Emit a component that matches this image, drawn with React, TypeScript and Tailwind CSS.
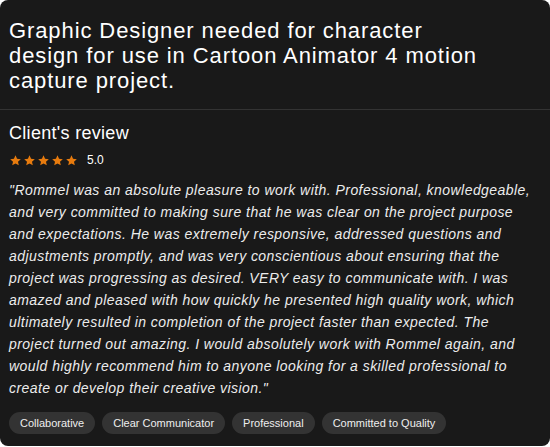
import React from 'react';

const TAGS = ['Collaborative', 'Clear Communicator', 'Professional', 'Committed to Quality'];

const Star = () => (
  <svg width="13" height="13" viewBox="0 0 24 24" fill="#e77b0e">
    <path d="M12 2.5l2.9 6.3 6.9.7-5.2 4.6 1.5 6.8L12 17.4l-6.1 3.5 1.5-6.8-5.2-4.6 6.9-.7z" />
  </svg>
);

export default function App() {
  return (
    <div className="w-[550px] h-[447px] bg-white" style={{ fontFamily: '"Liberation Sans", Arial, sans-serif' }}>
      <div className="h-[446px] bg-[#191919] rounded-lg overflow-hidden text-white">
        <div className="px-[9px] pt-[18px] pb-[16px] border-b border-[#333]">
          <h1 className="max-w-[478px] text-[22px] leading-[25px] font-normal tracking-[0.9px]">
            Graphic Designer needed for character design for use in Cartoon Animator 4 motion capture project.
          </h1>
        </div>
        <div className="px-[9px] pt-[12px]">
          <h2 className="text-[18px] leading-[22px] tracking-[0.3px]">Client's review</h2>
          <div className="flex items-center gap-[1px] mt-[8px] h-[16px]">
            <Star />
            <Star />
            <Star />
            <Star />
            <Star />
            <span className="ml-[8px] text-[12px]">5.0</span>
          </div>
          <p className="max-w-[527px] mt-[11px] text-[14px] leading-[22px] italic tracking-[0.45px] text-[#ececec]">
            "Rommel was an absolute pleasure to work with. Professional, knowledgeable, and very committed to making sure that he was clear on the project purpose and expectations. He was extremely responsive, addressed questions and adjustments promptly, and was very conscientious about ensuring that the project was progressing as desired. VERY easy to communicate with. I was amazed and pleased with how quickly he presented high quality work, which ultimately resulted in completion of the project faster than expected. The project turned out amazing. I would absolutely work with Rommel again, and would highly recommend him to anyone looking for a skilled professional to create or develop their creative vision."
          </p>
          <div className="flex gap-[7px] mt-[13px]">
            {TAGS.map((t) => (
              <span key={t} className="h-[22px] px-[11px] rounded-full bg-[#333333] text-[11px] leading-[22px] text-[#eee]">
                {t}
              </span>
            ))}
          </div>
        </div>
      </div>
    </div>
  );
}
